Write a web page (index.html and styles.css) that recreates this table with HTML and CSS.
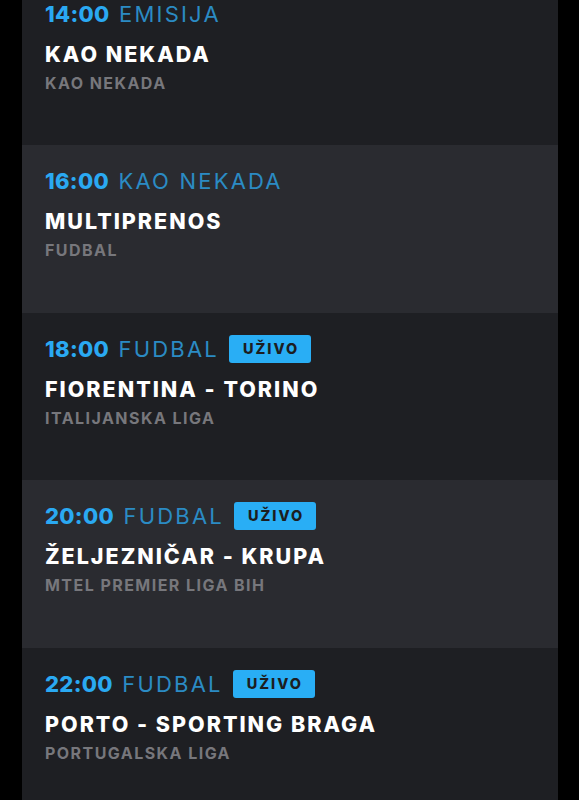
FILE: index.html
```html
<!DOCTYPE html>
<html>
<head>
<meta charset="utf-8">
<link rel="stylesheet" href="styles.css">
</head>
<body>
<div class="list">
  <div class="row dark">
    <div class="head"><span class="time">14:00</span><span class="cat">EMISIJA</span></div>
    <div class="title">KAO NEKADA</div>
    <div class="sub">KAO NEKADA</div>
  </div>
  <div class="row light">
    <div class="head"><span class="time">16:00</span><span class="cat">KAO NEKADA</span></div>
    <div class="title">MULTIPRENOS</div>
    <div class="sub">FUDBAL</div>
  </div>
  <div class="row dark">
    <div class="head"><span class="time">18:00</span><span class="cat">FUDBAL</span><span class="live">UŽIVO</span></div>
    <div class="title">FIORENTINA - TORINO</div>
    <div class="sub">ITALIJANSKA LIGA</div>
  </div>
  <div class="row light">
    <div class="head"><span class="time">20:00</span><span class="cat">FUDBAL</span><span class="live">UŽIVO</span></div>
    <div class="title">ŽELJEZNIČAR - KRUPA</div>
    <div class="sub">MTEL PREMIER LIGA BIH</div>
  </div>
  <div class="row dark">
    <div class="head"><span class="time">22:00</span><span class="cat">FUDBAL</span><span class="live">UŽIVO</span></div>
    <div class="title">PORTO - SPORTING BRAGA</div>
    <div class="sub">PORTUGALSKA LIGA</div>
  </div>
</div>
</body>
</html>
```
FILE: styles.css
```css
html, body {
  margin: 0;
  padding: 0;
  background: #000;
  height: 800px;
  overflow: hidden;
}
body {
  font-family: Inter, "Noto Sans", sans-serif;
}
.list {
  width: 536px;
  margin-left: 22px;
  margin-top: -22.5px;
}
.row {
  height: 167.5px;
  box-sizing: border-box;
  padding: 22px 23px 0;
}
.dark { background: #1e1f23; }
.light { background: #2a2b30; }
.head {
  display: flex;
  align-items: center;
  height: 28px;
}
.time {
  color: #2aa9f2;
  font-weight: 800;
  font-size: 22px;
  letter-spacing: 0.3px;
}
.cat {
  color: #2b8bc4;
  font-weight: 400;
  font-size: 22px;
  margin-left: 9.5px;
  letter-spacing: 2.2px;
}
.live {
  margin-left: 10px;
  background: #29aef5;
  color: #1c1d21;
  font-weight: 800;
  font-size: 14.5px;
  height: 28px;
  line-height: 28px;
  padding: 0 12px 0 14px;
  border-radius: 3px;
  letter-spacing: 2px;
}
.title {
  margin-top: 13px;
  color: #fff;
  font-weight: 800;
  font-size: 21.5px;
  line-height: 26px;
  letter-spacing: 2px;
}
.sub {
  margin-top: 6px;
  color: #77777c;
  font-weight: 700;
  font-size: 16px;
  line-height: 20px;
  letter-spacing: 1.45px;
}
```
